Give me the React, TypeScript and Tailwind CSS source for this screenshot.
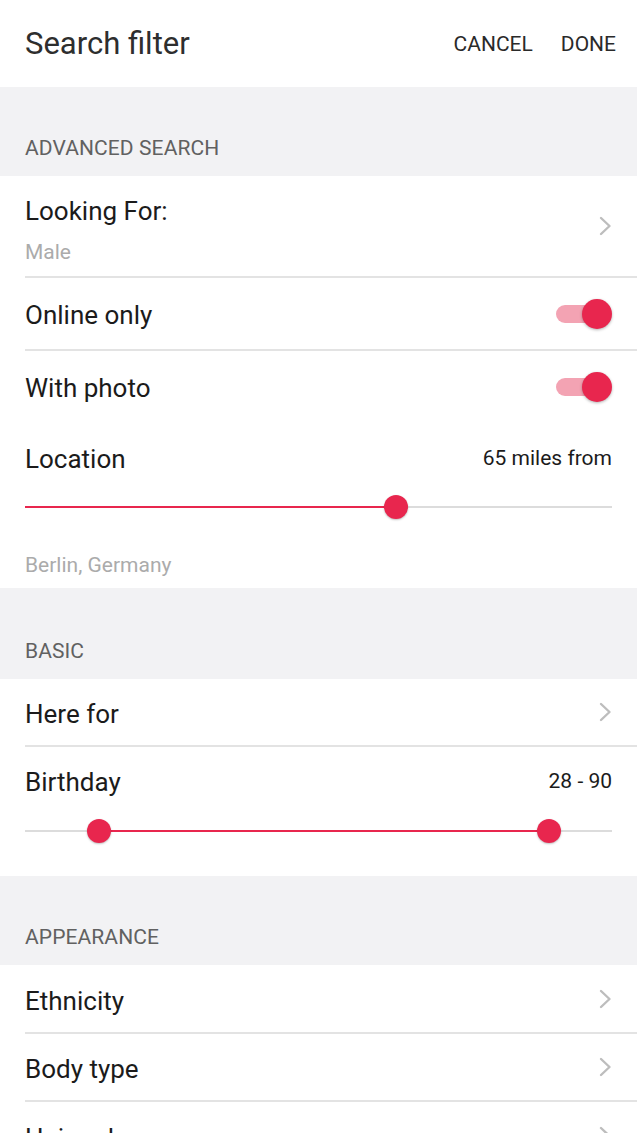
import React from "react";

function Chevron() {
  return (
    <svg width="13" height="20" viewBox="0 0 13 20" fill="none">
      <polyline points="2,2 10.5,10 2,18" stroke="#bdbdbd" strokeWidth="2.4" strokeLinecap="round" strokeLinejoin="round" />
    </svg>
  );
}

function Toggle() {
  return (
    <div className="relative w-[56px] h-[30px]">
      <div className="absolute left-0 top-[6px] w-[50px] h-[18px] rounded-full bg-[#f3a3b3]" />
      <div className="absolute right-0 top-0 w-[30px] h-[30px] rounded-full bg-[#e8264e] shadow-[0_1px_3px_rgba(0,0,0,0.3)]" />
    </div>
  );
}

function Slider({ from, to, thumbs }: { from: number; to: number; thumbs: number[] }) {
  return (
    <div className="relative h-[24px] mx-[25px]">
      <div className="absolute left-0 right-0 top-[11px] h-[2px] bg-[#dcdcdc]" />
      <div
        className="absolute top-[11px] h-[2px] bg-[#e8264e]"
        style={{ left: `${from}%`, width: `${to - from}%` }}
      />
      {thumbs.map((t, i) => (
        <div
          key={i}
          className="absolute top-0 w-[24px] h-[24px] -ml-[12px] rounded-full bg-[#e8264e] shadow-[0_1px_2px_rgba(0,0,0,0.25)]"
          style={{ left: `${t}%` }}
        />
      ))}
    </div>
  );
}

function SectionHeader({ title, h }: { title: string; h: string }) {
  return (
    <div className={`${h} bg-[#f2f2f4] flex items-end px-[25px] pb-[16px]`}>
      <span className="text-[21px] leading-[24px] text-[#616161] tracking-[0.1px]">{title}</span>
    </div>
  );
}

function Divider() {
  return <div className="ml-[25px] h-[2px] bg-[#e3e3e3]" />;
}

function NavRow({ label, h }: { label: string; h: string }) {
  return (
    <div className={`${h} flex items-center justify-between pl-[25px] pr-[25px]`}>
      <span className="text-[26px] leading-[30px] text-[#1b1b1b] pt-[4px]">{label}</span>
      <Chevron />
    </div>
  );
}

export default function App() {
  return (
    <div
      className="w-[637px] h-[1133px] overflow-hidden bg-white"
      style={{ fontFamily: "Roboto, 'Noto Sans', sans-serif" }}
    >
      <div className="h-[87px] flex items-center justify-between pl-[25px] pr-[21px]">
        <span className="text-[31px] leading-[36px] text-[#2e2e2e]">Search filter</span>
        <div className="flex gap-[28px] text-[21px] leading-[24px] text-[#2a2a2a]">
          <span>CANCEL</span>
          <span>DONE</span>
        </div>
      </div>

      <SectionHeader title="ADVANCED SEARCH" h="h-[89px]" />

      <div className="h-[100px] flex items-center justify-between pl-[25px] pr-[25px]">
        <div className="flex flex-col pt-[8px]">
          <span className="text-[26px] leading-[30px] text-[#1b1b1b]">Looking For:</span>
          <span className="mt-[14px] text-[21px] leading-[24px] text-[#ababab]">Male</span>
        </div>
        <Chevron />
      </div>
      <Divider />
      <div className="h-[71px] flex items-center justify-between pl-[25px] pr-[25px]">
        <span className="text-[26px] leading-[30px] text-[#1b1b1b] pt-[2px]">Online only</span>
        <Toggle />
      </div>
      <Divider />
      <div className="h-[72px] flex items-center justify-between pl-[25px] pr-[25px]">
        <span className="text-[26px] leading-[30px] text-[#1b1b1b] pt-[2px]">With photo</span>
        <Toggle />
      </div>
      <div className="h-[165px] flex flex-col pt-[21px]">
        <div className="flex items-center justify-between px-[25px]">
          <span className="text-[26px] leading-[30px] text-[#1b1b1b]">Location</span>
          <span className="text-[21px] leading-[24px] text-[#1b1b1b] -mt-[2px]">65 miles from</span>
        </div>
        <div className="mt-[21px]">
          <Slider from={0} to={63.2} thumbs={[63.2]} />
        </div>
        <div className="px-[25px] mt-[34px]">
          <span className="text-[21px] leading-[24px] text-[#ababab]">Berlin, Germany</span>
        </div>
      </div>

      <SectionHeader title="BASIC" h="h-[91px]" />

      <NavRow label="Here for" h="h-[66px]" />
      <Divider />
      <div className="h-[129px] flex flex-col pt-[20px]">
        <div className="flex items-center justify-between px-[25px]">
          <span className="text-[26px] leading-[30px] text-[#1b1b1b]">Birthday</span>
          <span className="text-[21px] leading-[24px] text-[#1b1b1b] -mt-[3px]">28 - 90</span>
        </div>
        <div className="mt-[22px]">
          <Slider from={12.6} to={89.3} thumbs={[12.6, 89.3]} />
        </div>
      </div>

      <SectionHeader title="APPEARANCE" h="h-[89px]" />

      <NavRow label="Ethnicity" h="h-[67px]" />
      <Divider />
      <NavRow label="Body type" h="h-[66px]" />
      <Divider />
      <NavRow label="Hair color" h="h-[68px]" />
    </div>
  );
}
